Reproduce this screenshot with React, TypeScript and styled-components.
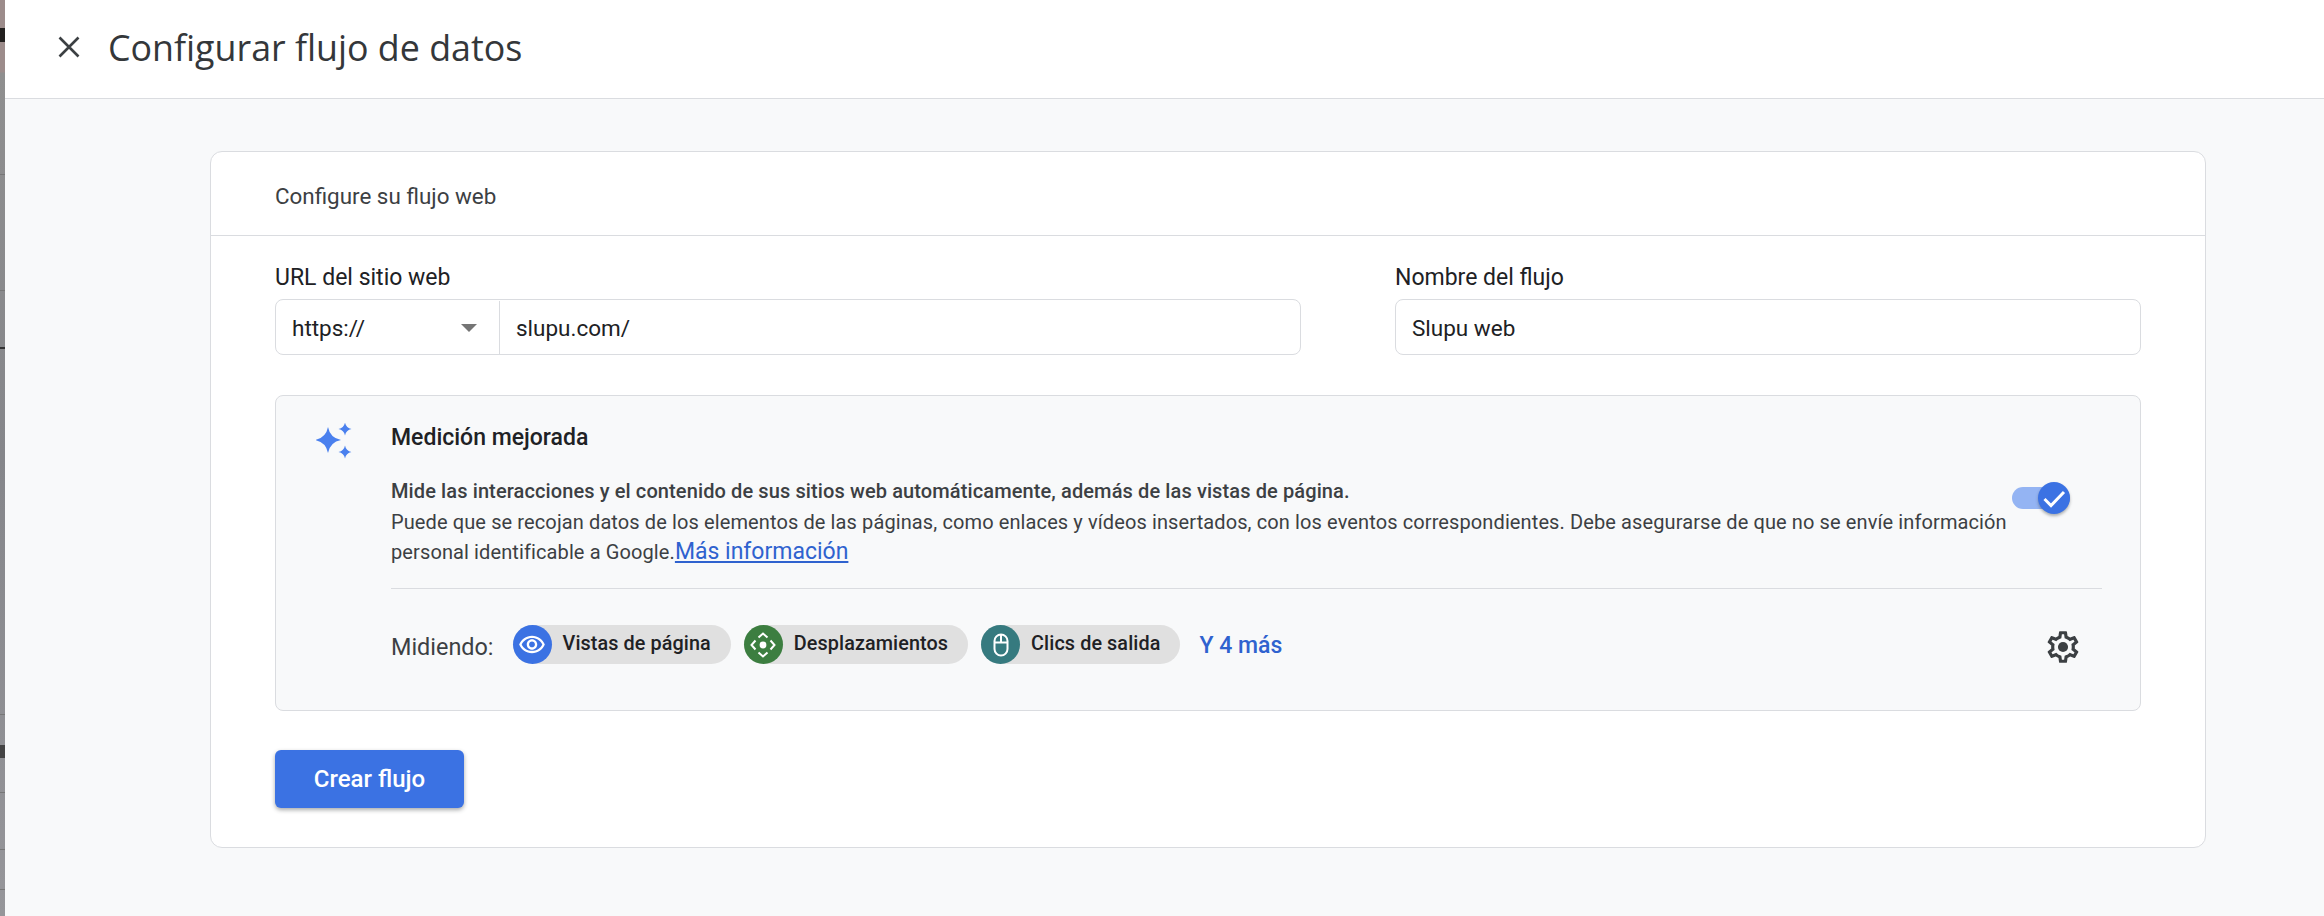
import React from "react";
import styled, { createGlobalStyle } from "styled-components";

const GlobalStyle = createGlobalStyle`
  html, body {
    margin: 0;
    padding: 0;
    background: #f8f9fa;
    font-family: Roboto, "Liberation Sans", sans-serif;
    color: #3c4043;
  }
  * {
    box-sizing: border-box;
  }
`;

const Page = styled.div`
  display: flex;
  width: 2324px;
  height: 916px;
  overflow: hidden;
`;

const DesktopEdge = styled.div`
  flex: 0 0 5px;
  background:
    linear-gradient(
      to bottom,
      transparent 0 28px,
      #22201f 28px 42px,
      transparent 42px 174px,
      #777 174px 175px,
      transparent 175px 290px,
      #777 290px 291px,
      transparent 291px 347px,
      #333 347px 349px,
      transparent 349px 714px,
      #777 714px 715px,
      transparent 715px 745px,
      #444 745px 758px,
      transparent 758px 792px,
      #777 792px 793px,
      transparent 793px 849px,
      #777 849px 850px,
      transparent 850px 889px,
      #777 889px 890px,
      transparent 890px
    ),
    linear-gradient(to bottom, #9c8c8b 0 72px, #8f8f8f 73px, #85868a 50%, #96969a 100%);
`;

const Main = styled.div`
  flex: 1;
  display: flex;
  flex-direction: column;
  background: #f8f9fa;
`;

const Header = styled.header`
  flex: 0 0 99px;
  display: flex;
  align-items: center;
  gap: 28px;
  padding: 0 0 4px 53px;
  background: #fff;
  border-bottom: 1px solid #dadce0;
`;

const Title = styled.h1`
  margin: 0;
  font-family: "Open Sans", sans-serif;
  font-size: 35.8px;
  font-weight: 400;
  color: #34373a;
  line-height: 44px;
`;

const Content = styled.main`
  flex: 1;
  padding: 52px 118px 0 205px;
`;

const Card = styled.section`
  height: 697px;
  background: #fff;
  border: 1px solid #dadce0;
  border-radius: 12px;
`;

const CardHead = styled.div`
  height: 84px;
  display: flex;
  align-items: center;
  padding: 4px 0 0 64px;
  border-bottom: 1px solid #dadce0;
  font-size: 22.4px;
  color: #3c4043;
`;

const CardBody = styled.div`
  padding: 29px 64px 0;
`;

const FormRow = styled.div`
  display: grid;
  grid-template-columns: 1026px 746px;
  column-gap: 94px;
`;

const Label = styled.label`
  display: block;
  font-size: 23px;
  line-height: 26px;
  color: #202124;
  margin-bottom: 8px;
`;

const FieldBox = styled.div`
  height: 56px;
  display: flex;
  align-items: center;
  padding-top: 1px;
  background: #fff;
  border: 1px solid #dadce0;
  border-radius: 8px;
  font-size: 22.5px;
  color: #202124;
`;

const SelectPart = styled.div`
  flex: 0 0 224px;
  height: 100%;
  display: flex;
  align-items: center;
  justify-content: space-between;
  padding: 0 22px 0 16px;
  border-right: 1px solid #dadce0;
`;

const Caret = styled.span`
  width: 0;
  height: 0;
  border-left: 8px solid transparent;
  border-right: 8px solid transparent;
  border-top: 8px solid #757575;
`;

const FieldText = styled.span`
  padding-left: 16px;
`;

const Enhanced = styled.div`
  margin-top: 40px;
  height: 316px;
  display: grid;
  grid-template-columns: 75px 1fr;
  padding: 27px 38px 0 40px;
  background: #f8f9fa;
  border: 1px solid #dadce0;
  border-radius: 8px;
`;

const EnhancedTitle = styled.h2`
  margin: 0;
  font-size: 23px;
  font-weight: 500;
  line-height: 30px;
  color: #202124;
`;

const DescRow = styled.div`
  display: flex;
  align-items: flex-start;
  margin-top: 23px;
`;

const Desc = styled.p`
  margin: 0;
  flex: 0 0 1621px;
  font-size: 20px;
  letter-spacing: 0.11px;
  line-height: 30.5px;
  white-space: nowrap;
  color: #3c4043;
`;

const DescStrong = styled.strong`
  font-weight: 500;
  color: #3c4043;
`;

const MoreLink = styled.a`
  font-size: 23px;
  letter-spacing: 0;
  color: #2f62cf;
  text-decoration: underline;
`;

const Toggle = styled.div`
  position: relative;
  width: 58px;
  height: 22px;
  margin-top: 11px;
  background: #94b4f3;
  border-radius: 11px;
`;

const ToggleThumb = styled.span`
  position: absolute;
  top: -5px;
  right: 0;
  width: 32px;
  height: 32px;
  display: flex;
  align-items: center;
  justify-content: center;
  border-radius: 50%;
  background: #3b72e3;
  box-shadow: 0 2px 3px rgba(60, 64, 67, 0.4);
`;

const Divider = styled.hr`
  margin: 20px 0 0;
  border: 0;
  border-top: 1px solid #dadce0;
`;

const MeasureRow = styled.div`
  display: flex;
  align-items: center;
  margin-top: 35px;
`;

const MeasureLabel = styled.span`
  margin: 4px 19px 0 0;
  font-size: 23.4px;
  color: #3c4043;
`;

const Chip = styled.div`
  height: 39px;
  display: flex;
  align-items: center;
  margin-right: 13px;
  padding-right: 20px;
  background: #e0e0e0;
  border-radius: 20px;
  font-size: 19.8px;
  font-weight: 500;
  letter-spacing: 0.1px;
  color: #202124;
`;

const ChipIcon = styled.span<{ $color: string }>`
  width: 39px;
  height: 39px;
  display: flex;
  align-items: center;
  justify-content: center;
  margin-right: 11px;
  border-radius: 50%;
  background: ${(p) => p.$color};
`;

const ChipLabel = styled.span`
  margin-top: -2px;
`;

const MoreChips = styled.span`
  margin: 2px 0 0 6px;
  font-size: 23px;
  font-weight: 500;
  color: #2f62cf;
`;

const GearWrap = styled.span`
  margin: 4px 20px 0 auto;
  display: flex;
`;

const CreateButton = styled.button`
  display: block;
  margin-top: 39px;
  width: 189px;
  height: 58px;
  border: 0;
  border-radius: 6px;
  background: #3b72e3;
  box-shadow: 0 2px 4px rgba(60, 64, 67, 0.45);
  color: #fff;
  font-family: Roboto, sans-serif;
  font-size: 24px;
  font-weight: 500;
`;

const star = (cx: number, cy: number, r: number) => {
  const k = r * 0.16;
  return `M${cx} ${cy - r}Q${cx + k} ${cy - k} ${cx + r} ${cy}Q${cx + k} ${cy + k} ${cx} ${cy + r}Q${cx - k} ${cy + k} ${cx - r} ${cy}Q${cx - k} ${cy - k} ${cx} ${cy - r}Z`;
};

const CloseIcon = () => (
  <svg width="22" height="22" viewBox="0 0 22 22">
    <path d="M1.5 1.5 20.5 20.5M20.5 1.5 1.5 20.5" stroke="#3c4043" strokeWidth="2.6" fill="none" />
  </svg>
);

const SparkIcon = () => (
  <svg width="36" height="36" viewBox="0 0 36 36">
    <path d={star(12, 17, 13) + star(29, 6, 6.5) + star(29, 29, 6.5)} fill="#4a80ee" />
  </svg>
);

const CheckIcon = () => (
  <svg width="24" height="24" viewBox="0 0 24 24">
    <path d="M2.5 13 9 19.5 22 6" stroke="#fff" strokeWidth="3" fill="none" />
  </svg>
);

const EyeIcon = () => (
  <svg width="28" height="28" viewBox="0 0 24 24" fill="#fff">
    <path d="M12 6c3.79 0 7.17 2.13 8.82 5.5C19.17 14.87 15.79 17 12 17s-7.17-2.13-8.82-5.5C4.83 8.13 8.21 6 12 6m0-2C7 4 2.73 7.11 1 11.5 2.73 15.89 7 19 12 19s9.27-3.11 11-7.5C21.27 7.11 17 4 12 4zm0 5c1.38 0 2.5 1.12 2.5 2.5S13.38 14 12 14s-2.5-1.12-2.5-2.5S10.62 9 12 9m0-2c-2.48 0-4.5 2.02-4.5 4.5S9.52 16 12 16s4.5-2.02 4.5-4.5S14.48 7 12 7z" />
  </svg>
);

const ScrollIcon = () => (
  <svg width="26" height="26" viewBox="0 0 26 26" fill="none" stroke="#fff" strokeWidth="2">
    <circle cx="13" cy="13" r="3.4" fill="#fff" stroke="none" />
    <path d="M8.5 5.5 13 1.5 17.5 5.5M8.5 20.5 13 24.5 17.5 20.5M5.5 8.5 1.5 13 5.5 17.5M20.5 8.5 24.5 13 20.5 17.5" />
  </svg>
);

const MouseIcon = () => (
  <svg width="24" height="26" viewBox="0 0 24 26" fill="none" stroke="#fff" strokeWidth="2">
    <rect x="5.5" y="2.5" width="13" height="21" rx="6.5" />
    <path d="M5.5 10.5H18.5M12 2.5V10.5" />
  </svg>
);

const GearIcon = () => (
  <svg width="38" height="38" viewBox="0 0 24 24" fill="#3c4043">
    <path d="M19.43 12.98c.04-.32.07-.64.07-.98 0-.34-.03-.66-.07-.98l2.11-1.65c.19-.15.24-.42.12-.64l-2-3.46c-.09-.16-.26-.25-.44-.25-.06 0-.12.01-.17.03l-2.49 1c-.52-.4-1.08-.73-1.69-.98l-.38-2.65C14.46 2.18 14.25 2 14 2h-4c-.25 0-.46.18-.49.42l-.38 2.65c-.61.25-1.17.59-1.69.98l-2.49-1c-.06-.02-.12-.03-.18-.03-.17 0-.34.09-.43.25l-2 3.46c-.13.22-.07.49.12.64l2.11 1.65c-.04.32-.07.65-.07.98 0 .33.03.66.07.98l-2.11 1.65c-.19.15-.24.42-.12.64l2 3.46c.09.16.26.25.44.25.06 0 .12-.01.17-.03l2.49-1c.52.4 1.08.73 1.69.98l.38 2.65c.03.24.24.42.49.42h4c.25 0 .46-.18.49-.42l.38-2.65c.61-.25 1.17-.59 1.69-.98l2.49 1c.06.02.12.03.18.03.17 0 .34-.09.43-.25l2-3.46c.12-.22.07-.49-.12-.64l-2.11-1.65zm-1.98-1.71c.04.31.05.52.05.73 0 .21-.02.43-.05.73l-.14 1.13.89.7 1.08.84-.7 1.21-1.27-.51-1.04-.42-.9.68c-.43.32-.84.56-1.25.73l-1.06.43-.16 1.13-.2 1.35h-1.4l-.19-1.35-.16-1.13-1.06-.43c-.43-.18-.83-.41-1.23-.71l-.91-.7-1.06.43-1.27.51-.7-1.21 1.08-.84.89-.7-.14-1.13c-.03-.31-.05-.54-.05-.74s.02-.43.05-.73l.14-1.13-.89-.7-1.08-.84.7-1.21 1.27.51 1.04.42.9-.68c.43-.32.84-.56 1.25-.73l1.06-.43.16-1.13.2-1.35h1.39l.19 1.35.16 1.13 1.06.43c.43.18.83.41 1.23.71l.91.7 1.06-.43 1.27-.51.7 1.21-1.07.85-.89.7.14 1.13z" />
    <circle cx="12" cy="12" r="3.2" />
  </svg>
);

export default function App() {
  return (
    <>
      <GlobalStyle />
      <Page>
        <DesktopEdge />
        <Main>
          <Header>
            <CloseIcon />
            <Title>Configurar flujo de datos</Title>
          </Header>
          <Content>
            <Card>
              <CardHead>Configure su flujo web</CardHead>
              <CardBody>
                <FormRow>
                  <div>
                    <Label>URL del sitio web</Label>
                    <FieldBox>
                      <SelectPart>
                        https://
                        <Caret />
                      </SelectPart>
                      <FieldText>slupu.com/</FieldText>
                    </FieldBox>
                  </div>
                  <div>
                    <Label>Nombre del flujo</Label>
                    <FieldBox>
                      <FieldText>Slupu web</FieldText>
                    </FieldBox>
                  </div>
                </FormRow>

                <Enhanced>
                  <SparkIcon />
                  <div>
                    <EnhancedTitle>Medición mejorada</EnhancedTitle>
                    <DescRow>
                      <Desc>
                        <DescStrong>
                          Mide las interacciones y el contenido de sus sitios web automáticamente, además de las vistas de página.
                        </DescStrong>
                        <br />
                        Puede que se recojan datos de los elementos de las páginas, como enlaces y vídeos insertados, con los eventos correspondientes. Debe asegurarse de que no se envíe información
                        <br />
                        personal identificable a Google.
                        <MoreLink href="#">Más información</MoreLink>
                      </Desc>
                      <Toggle>
                        <ToggleThumb>
                          <CheckIcon />
                        </ToggleThumb>
                      </Toggle>
                    </DescRow>
                    <Divider />
                    <MeasureRow>
                      <MeasureLabel>Midiendo:</MeasureLabel>
                      <Chip>
                        <ChipIcon $color="#3b72e3">
                          <EyeIcon />
                        </ChipIcon>
                        <ChipLabel>Vistas de página</ChipLabel>
                      </Chip>
                      <Chip>
                        <ChipIcon $color="#3c7e40">
                          <ScrollIcon />
                        </ChipIcon>
                        <ChipLabel>Desplazamientos</ChipLabel>
                      </Chip>
                      <Chip>
                        <ChipIcon $color="#367a7f">
                          <MouseIcon />
                        </ChipIcon>
                        <ChipLabel>Clics de salida</ChipLabel>
                      </Chip>
                      <MoreChips>Y 4 más</MoreChips>
                      <GearWrap>
                        <GearIcon />
                      </GearWrap>
                    </MeasureRow>
                  </div>
                </Enhanced>

                <CreateButton>Crear flujo</CreateButton>
              </CardBody>
            </Card>
          </Content>
        </Main>
      </Page>
    </>
  );
}
